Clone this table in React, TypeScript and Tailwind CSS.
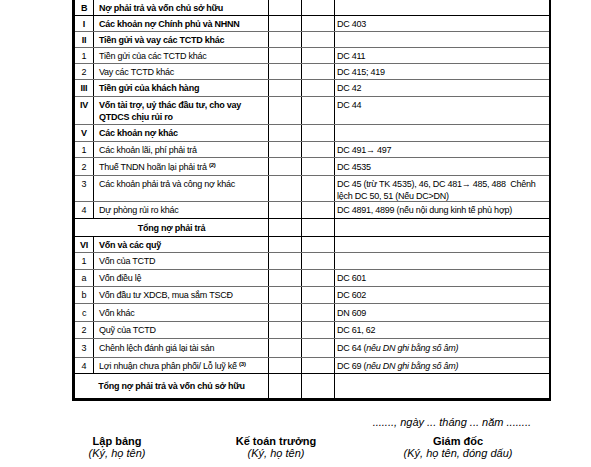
import React from "react";

type Row = {
  no?: string;
  label: React.ReactNode;
  bold?: boolean;
  h: number;
  dc?: React.ReactNode;
  line?: "black" | "gray" | "none";
  total?: boolean;
  tall?: boolean;
};

const rows: Row[] = [
  { no: "B", label: "Nợ phải trả và vốn chủ sở hữu", bold: true, h: 16, line: "black" },
  { no: "I", label: "Các khoản nợ Chính phủ và NHNN", bold: true, h: 16, dc: "DC 403" },
  { no: "II", label: "Tiền gửi và vay các TCTD khác", bold: true, h: 16 },
  { no: "1", label: "Tiền gửi của các TCTD khác", h: 16, dc: "DC 411" },
  { no: "2", label: "Vay các TCTD khác", h: 16, dc: "DC 415; 419" },
  { no: "III", label: "Tiền gửi của khách hàng", bold: true, h: 17, dc: "DC 42" },
  {
    no: "IV",
    label: (
      <>
        Vốn tài trợ, uỷ thác đầu tư, cho vay
        <br />
        QTDCS chịu rủi ro
      </>
    ),
    bold: true,
    h: 28,
    dc: "DC 44",
    tall: true,
  },
  { no: "V", label: "Các khoản nợ khác", bold: true, h: 17 },
  { no: "1", label: "Các khoản lãi, phí phải trả", h: 16, dc: "DC 491→ 497" },
  {
    no: "2",
    label: (
      <>
        Thuế TNDN hoãn lại phải trả <sup className="text-[6px] font-bold">(2)</sup>
      </>
    ),
    h: 18,
    dc: "DC 4535",
  },
  {
    no: "3",
    label: "Các khoản phải trả và công nợ khác",
    h: 26,
    tall: true,
    dc: (
      <>
        DC 45 (trừ TK 4535), 46, DC 481→ 485, 488&nbsp; Chênh
        <br />
        lệch DC 50, 51 (Nếu DC&gt;DN)
      </>
    ),
  },
  { no: "4", label: "Dự phòng rủi ro khác", h: 17, dc: "DC 4891, 4899 (nếu nội dung kinh tế phù hợp)", line: "black" },
  { label: "Tổng nợ phải trả", bold: true, h: 18, total: true, line: "black" },
  { no: "VI", label: "Vốn và các quỹ", bold: true, h: 16 },
  { no: "1", label: "Vốn của TCTD", h: 17 },
  { no: "a", label: "Vốn điều lệ", h: 17, dc: "DC 601" },
  { no: "b", label: "Vốn đầu tư XDCB, mua sắm TSCĐ", h: 17, dc: "DC 602" },
  { no: "c", label: "Vốn khác", h: 18, dc: "DN 609" },
  { no: "2", label: "Quỹ của TCTD", h: 17, dc: "DC 61, 62" },
  {
    no: "3",
    label: "Chênh lệch đánh giá lại tài sản",
    h: 19,
    dc: (
      <>
        DC 64 (<i>nếu DN ghi bằng số âm)</i>
      </>
    ),
  },
  {
    no: "4",
    label: (
      <>
        Lợi nhuận chưa phân phối/ Lỗ luỹ kế <sup className="text-[6px] font-bold">(3)</sup>
      </>
    ),
    h: 16,
    dc: (
      <>
        DC 69 (<i>nếu DN ghi bằng số âm)</i>
      </>
    ),
    line: "black",
  },
  { label: "Tổng nợ phải trả và vốn chủ sở hữu", bold: true, h: 24, total: true, line: "none" },
];

export default function App() {
  return (
    <div
      className="w-[591px] h-[467px] bg-white text-black overflow-hidden"
      style={{ fontFamily: '"Liberation Sans", Arial, sans-serif' }}
    >
      {/* Table */}
      <div className="ml-[72px] w-[479px] border-l-[3px] border-r-2 border-b-[3px] border-black text-[9px] tracking-[-0.25px] leading-[12px]">
        {rows.map((r, i) => {
          const lineCls =
            r.line === "black" ? "border-b border-black" : r.line === "none" ? "" : "border-b border-[#6e6e6e]";
          const align = r.tall ? "items-start pt-[2px]" : "items-center";
          return (
            <div key={i} className={`flex ${lineCls}`} style={{ height: r.h }}>
              {r.total ? (
                <div className={`w-[194px] shrink-0 border-r border-black flex ${align} justify-center font-bold`}>
                  {r.label}
                </div>
              ) : (
                <>
                  <div
                    className={`w-[19px] shrink-0 border-r border-black flex ${align} justify-center ${
                      r.bold ? "font-bold" : ""
                    }`}
                  >
                    {r.no}
                  </div>
                  <div
                    className={`w-[175px] shrink-0 border-r border-black flex ${align} pl-[5px] ${
                      r.bold ? "font-bold" : ""
                    }`}
                  >
                    <span>{r.label}</span>
                  </div>
                </>
              )}
              <div className="w-[33px] shrink-0 border-r border-black" />
              <div className="w-[33px] shrink-0 border-r border-black" />
              <div className={`flex-1 flex ${align} pl-[2px]`}>
                <span>{r.dc}</span>
              </div>
            </div>
          );
        })}
      </div>

      {/* Signatures */}
      <div className="ml-[72px] w-[479px] mt-[14px] flex justify-end pr-[20px] text-[11px] italic leading-[14px]">
        ......., ngày ... tháng ... năm ........
      </div>
      <div className="ml-[72px] w-[479px] mt-[6px] flex text-[11px] leading-[12px]">
        <div className="w-[90px] flex flex-col items-center">
          <span className="font-bold">Lập bảng</span>
          <span className="italic">(Ký, họ tên)</span>
        </div>
        <div className="w-[228px] flex flex-col items-center">
          <span className="font-bold">Kế toán trưởng</span>
          <span className="italic">(Ký, họ tên)</span>
        </div>
        <div className="w-[136px] flex flex-col items-center">
          <span className="font-bold">Giám đốc</span>
          <span className="italic">(Ký, họ tên, đóng dấu)</span>
        </div>
      </div>
    </div>
  );
}
